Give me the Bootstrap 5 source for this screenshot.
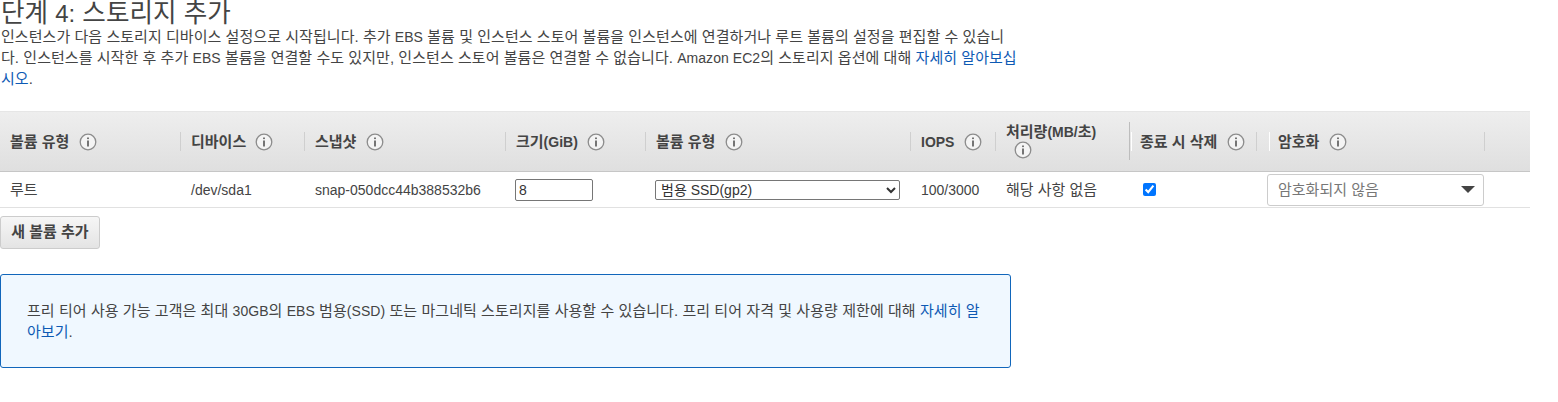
<!DOCTYPE html>
<html lang="ko">
<head>
    <meta charset="UTF-8">
    <meta name="viewport" content="width=device-width, initial-scale=1.0">
    <title>스토리지 추가</title>
    <link href="https://cdn.jsdelivr.net/npm/bootstrap@5.3.0/dist/css/bootstrap.min.css" rel="stylesheet">
    <style>
        body {
            background-color: #fff;
            color: #444;
            font-family: "Liberation Sans", "Noto Sans CJK KR", sans-serif;
            font-size: 15px;
            line-height: 21px;
            overflow: hidden;
        }
        a { color: #0e5ab4; text-decoration: none; }
        .lat { font-size: 14px; line-height: 1; }
        .step-title {
            font-family: inherit;
            font-size: 25.6px;
            line-height: 26px;
            color: #444;
            font-weight: 400;
            margin: 0 0 0 1px;
        }
        .step-title .num { font-size: 24px; line-height: 1; }
        .step-desc {
            width: 1020px;
            margin: 0 0 22px 1px;
            word-break: break-all;
            letter-spacing: .05px;
        }
        .vol-table {
            width: 1530px;
            table-layout: fixed;
            border-collapse: separate;
            border-spacing: 0;
            margin-bottom: 8px;
        }
        .vol-table th {
            height: 61px;
            padding: 0 10px;
            font-weight: 700;
            line-height: 18px;
            color: #444;
            vertical-align: middle;
            background: linear-gradient(#eeeeee, #dfdfdf);
            border-top: 1px solid #e6e6e6;
            border-bottom: 1px solid #c6c6c6;
            position: relative;
        }
        .vol-table th.sep::after {
            content: "";
            position: absolute;
            right: 0;
            top: 20px;
            height: 19px;
            width: 1px;
            background: #cfcfcf;
        }
        .vol-table th.tall { padding-bottom: 2px; }
        .vol-table th.tall::after { top: 10px; height: 38px; background: #bdbdbd; }
        .vol-table th.lit::before {
            content: "";
            position: absolute;
            left: 1px;
            top: 20px;
            height: 19px;
            width: 1px;
            background: #fff;
        }
        .vol-table td {
            height: 36px;
            padding: 0 10px;
            vertical-align: middle;
            border-bottom: 1px solid #e1e1e1;
            color: #444;
        }
        .info-ico { width: 18px; height: 18px; margin-left: 5px; vertical-align: -4px; }
        .size-box {
            width: 78px;
            height: 22px;
            margin-left: -1px;
            border: 1px solid #767676;
            border-radius: 2px;
            padding: 0 3px;
            font-size: 14px;
            font-family: inherit;
            color: #333;
            display: block;
        }
        .type-box {
            width: 245px;
            height: 20px;
            margin-left: -1px;
            border: 1px solid #767676;
            border-radius: 2px;
            padding: 0 0 0 1px;
            font-size: 14px;
            font-family: inherit;
            color: #333;
            background: #fff;
            display: block;
        }
        .enc-box {
            width: 217px;
            height: 32px;
            border: 1px solid #ccc;
            border-radius: 3px;
            padding: 0 10px;
            color: #777;
            margin-left: -1px;
        }
        .enc-caret {
            width: 0;
            height: 0;
            border-left: 7px solid transparent;
            border-right: 7px solid transparent;
            border-top: 7px solid #444;
            margin-right: -2px;
        }
        .del-check {
            width: 13px;
            height: 13px;
            margin: 0 0 0 3px;
            display: block;
            accent-color: #0075ff;
        }
        .add-btn {
            height: 33px;
            width: 100px;
            padding: 0;
            font-size: 15px;
            font-weight: 700;
            color: #444;
            background: linear-gradient(#f6f6f6, #e4e4e4);
            border: 1px solid #ccc;
            border-radius: 3px;
            display: block;
        }
        .tier-note {
            width: 1011px;
            height: 94px;
            margin-top: 25px;
            padding: 25px 25px 25px 26px;
            background: #f0f8ff;
            border: 1px solid #1166bb;
            border-radius: 3px;
            word-break: break-all;
            line-height: 21px;
            letter-spacing: .06px;
        }
    </style>
</head>
<body>
    <svg width="0" height="0" class="d-block">
        <symbol id="icoInfo" viewBox="0 0 18 18">
            <circle cx="9" cy="9" r="7.8" fill="#f4f4f4" stroke="#8c8c8c" stroke-width="1.3"/>
            <rect x="8.2" y="7.5" width="1.6" height="6" fill="#555"/>
            <rect x="8.2" y="4.5" width="1.6" height="1.6" fill="#555"/>
        </symbol>
    </svg>

    <h1 class="step-title">단계 <span class="num">4:</span> 스토리지 추가</h1>
    <p class="step-desc">인스턴스가 다음 스토리지 디바이스 설정으로 시작됩니다. 추가 <span class="lat">EBS</span> 볼륨 및 인스턴스 스토어 볼륨을 인스턴스에 연결하거나 루트 볼륨의 설정을 편집할 수 있습니<br>다. 인스턴스를 시작한 후 추가 <span class="lat">EBS</span> 볼륨을 연결할 수도 있지만, 인스턴스 스토어 볼륨은 연결할 수 없습니다. <span class="lat">Amazon EC2</span>의 스토리지 옵션에 대해 <a href="#">자세히 알아보십시오</a>.</p>

    <table class="vol-table">
        <colgroup>
            <col style="width:181px"><col style="width:124px"><col style="width:201px"><col style="width:140px">
            <col style="width:265px"><col style="width:85px"><col style="width:134px"><col style="width:127px">
            <col style="width:11px"><col style="width:217px"><col>
        </colgroup>
        <thead>
            <tr>
                <th class="sep">볼륨 유형 <svg class="info-ico"><use href="#icoInfo"/></svg></th>
                <th class="sep">디바이스 <svg class="info-ico"><use href="#icoInfo"/></svg></th>
                <th class="sep">스냅샷 <svg class="info-ico"><use href="#icoInfo"/></svg></th>
                <th class="sep">크기<span class="lat">(GiB)</span> <svg class="info-ico"><use href="#icoInfo"/></svg></th>
                <th class="sep">볼륨 유형 <svg class="info-ico"><use href="#icoInfo"/></svg></th>
                <th class="sep"><span class="lat">IOPS</span> <svg class="info-ico"><use href="#icoInfo"/></svg></th>
                <th class="sep tall">처리량<span class="lat">(MB/</span>초<span class="lat">)</span> <div class="text-start ps-2"><svg class="info-ico ms-0"><use href="#icoInfo"/></svg></div></th>
                <th class="sep lit">종료 시 삭제 <svg class="info-ico"><use href="#icoInfo"/></svg></th>
                <th></th>
                <th class="sep lit">암호화 <svg class="info-ico"><use href="#icoInfo"/></svg></th>
                <th></th>
            </tr>
        </thead>
        <tbody>
            <tr>
                <td>루트</td>
                <td class="lat">/dev/sda1</td>
                <td class="lat">snap-050dcc44b388532b6</td>
                <td><input class="size-box" type="text" value="8"></td>
                <td>
                    <select class="type-box">
                        <option>범용 SSD(gp2)</option>
                    </select>
                </td>
                <td class="lat">100/3000</td>
                <td>해당 사항 없음</td>
                <td><input class="del-check" type="checkbox" checked></td>
                <td></td>
                <td class="px-0">
                    <div class="enc-box d-flex align-items-center justify-content-between">
                        <span>암호화되지 않음</span>
                        <span class="enc-caret"></span>
                    </div>
                </td>
                <td></td>
            </tr>
        </tbody>
    </table>

    <button class="btn add-btn" type="button">새 볼륨 추가</button>

    <div class="tier-note">프리 티어 사용 가능 고객은 최대 <span class="lat">30GB</span>의 <span class="lat">EBS</span> 범용<span class="lat">(SSD)</span> 또는 마그네틱 스토리지를 사용할 수 있습니다. 프리 티어 자격 및 사용량 제한에 대해 <a href="#">자세히 알아보기</a>.</div>

    <script src="https://cdn.jsdelivr.net/npm/bootstrap@5.3.0/dist/js/bootstrap.bundle.min.js"></script>
</body>
</html>
